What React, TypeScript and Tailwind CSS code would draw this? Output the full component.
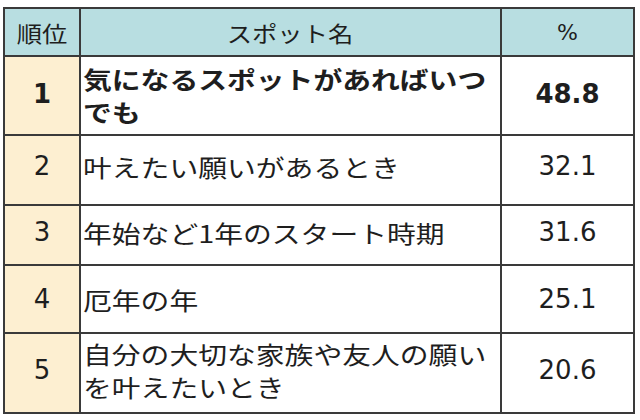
const rows = [
  { rank: "1", lines: ["気になるスポットがあればいつ", "でも"], pct: "48.8", bold: true, h: "h-[79px]", pad: "pb-[2px]" },
  { rank: "2", lines: ["叶えたい願いがあるとき"], pct: "32.1", bold: false, h: "h-[70px]", pad: "pb-[8px]" },
  { rank: "3", lines: ["年始など1年のスタート時期"], pct: "31.6", bold: false, h: "h-[60px]", pad: "pb-[6px]" },
  { rank: "4", lines: ["厄年の年"], pct: "25.1", bold: false, h: "h-[68px]", pad: "pb-0" },
  { rank: "5", lines: ["自分の大切な家族や友人の願い", "を叶えたいとき"], pct: "20.6", bold: false, h: "h-[80px]", pad: "pb-[6px]" },
];

const jp = "font-['Noto_Sans_CJK_JP',sans-serif]";
const num = "font-['DejaVu_Sans',Verdana,sans-serif]";

export default function App() {
  return (
    <div className="h-[420px] w-[640px] bg-white pl-[3px] pt-[7px] text-[#1e1e1e]">
      <table className="w-[630px] table-fixed border-collapse">
        <colgroup>
          <col className="w-[76px]" />
          <col className="w-[421px]" />
          <col className="w-[133px]" />
        </colgroup>
        <thead>
          <tr className="h-[48px] bg-[#b8dee1]">
            <th className={`border-2 border-[#3a3a3a] p-0 text-center text-[22px] font-normal ${jp}`}>
              <span className="inline-block origin-center scale-x-[1.15]">順位</span>
            </th>
            <th className={`border-2 border-[#3a3a3a] p-0 text-center text-[22px] font-normal ${jp}`}>
              <span className="inline-block origin-center scale-x-[1.15]">スポット名</span>
            </th>
            <th className={`border-2 border-[#3a3a3a] p-0 text-center text-[22px] font-normal ${num}`}>%</th>
          </tr>
        </thead>
        <tbody>
          {rows.map((r) => (
            <tr key={r.rank} className={r.h}>
              <td className={`border-2 border-[#3a3a3a] bg-[#fdefd1] p-0 ${r.pad} text-center text-[26px] ${num} ${r.bold ? "font-bold" : ""}`}>
                {r.rank}
              </td>
              <td className={`border-2 border-[#3a3a3a] pt-0 ${r.pad} pl-[2px] text-[24px] leading-[33px] ${jp} ${r.bold ? "font-bold" : "font-normal"}`}>
                <span className="inline-block origin-left scale-x-[1.2] whitespace-nowrap">
                  {r.lines.map((l, i) => (
                    <span key={i} className="block">
                      {l}
                    </span>
                  ))}
                </span>
              </td>
              <td className={`border-2 border-[#3a3a3a] p-0 ${r.pad} text-center text-[26px] ${num} ${r.bold ? "font-bold" : ""}`}>
                {r.pct}
              </td>
            </tr>
          ))}
        </tbody>
      </table>
    </div>
  );
}
